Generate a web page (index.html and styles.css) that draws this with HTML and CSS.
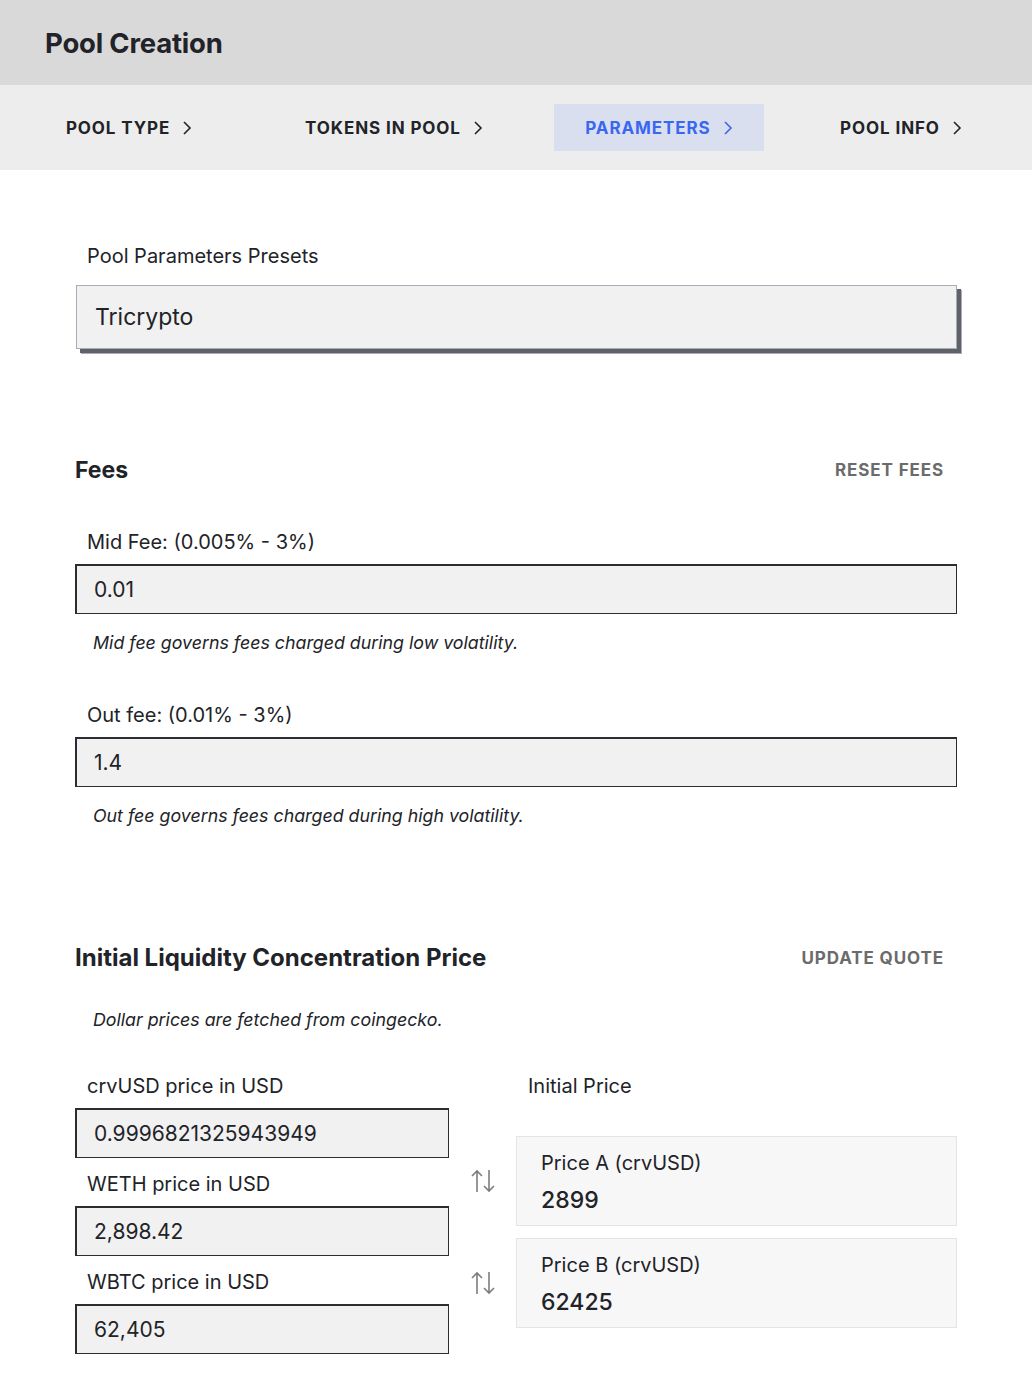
FILE: index.html
```html
<!DOCTYPE html>
<html lang="en">
<head>
  <meta charset="UTF-8" />
  <title>Pool Creation</title>
  <link rel="stylesheet" href="styles.css">
</head>
<body>

  <header class="page-header">
    <h1>Pool Creation</h1>
  </header>

  <nav class="steps">
    <div class="step"><span class="step-btn">POOL TYPE <svg class="chev" viewBox="0 0 10 16"><path d="M2 2 L8 8 L2 14" /></svg></span></div>
    <div class="step"><span class="step-btn">TOKENS IN POOL <svg class="chev" viewBox="0 0 10 16"><path d="M2 2 L8 8 L2 14" /></svg></span></div>
    <div class="step"><span class="step-btn active">PARAMETERS <svg class="chev" viewBox="0 0 10 16"><path d="M2 2 L8 8 L2 14" /></svg></span></div>
    <div class="step"><span class="step-btn">POOL INFO <svg class="chev" viewBox="0 0 10 16"><path d="M2 2 L8 8 L2 14" /></svg></span></div>
  </nav>

  <main class="content">

    <section class="presets">
      <label class="field-label">Pool Parameters Presets</label>
      <div class="select-box">Tricrypto</div>
    </section>

    <section class="fees">
      <div class="section-head">
        <h2>Fees</h2>
        <button class="text-btn">RESET FEES</button>
      </div>

      <div class="field">
        <label class="field-label" for="midFee">Mid Fee: (0.005% - 3%)</label>
        <input type="text" id="midFee" value="0.01" />
        <p class="note">Mid fee governs fees charged during low volatility.</p>
      </div>

      <div class="field">
        <label class="field-label" for="outFee">Out fee: (0.01% - 3%)</label>
        <input type="text" id="outFee" value="1.4" />
        <p class="note">Out fee governs fees charged during high volatility.</p>
      </div>
    </section>

    <section class="liquidity">
      <div class="section-head">
        <h2>Initial Liquidity Concentration Price</h2>
        <button class="text-btn">UPDATE QUOTE</button>
      </div>
      <p class="note">Dollar prices are fetched from coingecko.</p>

      <div class="price-grid">
        <div class="usd-col">
          <label class="field-label" for="crvusd">crvUSD price in USD</label>
          <input type="text" id="crvusd" value="0.9996821325943949" />
          <label class="field-label" for="weth">WETH price in USD</label>
          <input type="text" id="weth" value="2,898.42" />
          <label class="field-label" for="wbtc">WBTC price in USD</label>
          <input type="text" id="wbtc" value="62,405" />
        </div>

        <div class="initial-col">
          <div></div>
          <div class="field-label initial-title">Initial Price</div>

          <svg class="swap" viewBox="0 0 28 28"><path d="M8 25 V4 M3 9 L8 4 L13 9 M20 3 V24 M15 19 L20 24 L25 19" /></svg>
          <div class="price-card">
            <div class="price-name">Price A (crvUSD)</div>
            <div class="price-value">2899</div>
          </div>

          <svg class="swap" viewBox="0 0 28 28"><path d="M8 25 V4 M3 9 L8 4 L13 9 M20 3 V24 M15 19 L20 24 L25 19" /></svg>
          <div class="price-card">
            <div class="price-name">Price B (crvUSD)</div>
            <div class="price-value">62425</div>
          </div>
        </div>
      </div>
    </section>

  </main>
</body>
</html>
```

FILE: styles.css
```css
:root {
  --text: #212328;
  --muted: #6b6b6b;
  --blue: #3a67ef;
  --field-bg: #f1f1f1;
  --field-border: #2a2d32;
}

body {
  margin: 0;
  font-family: Inter, "Noto Sans", sans-serif;
  color: var(--text);
  background: #fff;
}

.page-header {
  height: 85px;
  background: #d9d9d9;
  display: flex;
  align-items: center;
  padding-left: 45px;
}

.page-header h1 {
  margin: 0;
  font-size: 27.5px;
  font-weight: 700;
  letter-spacing: -0.2px;
}

.steps {
  height: 85px;
  background: #ededed;
  display: grid;
  grid-template-columns: 258px 272px 258px 226px;
  align-items: center;
}

.step {
  display: flex;
  justify-content: center;
}

.step-btn {
  display: inline-flex;
  align-items: center;
  gap: 12px;
  height: 47px;
  padding: 0 31px;
  font-size: 17px;
  font-weight: 700;
  letter-spacing: 0.9px;
}

.step-btn.active {
  background: #d9dfee;
  color: var(--blue);
}

.chev {
  width: 10px;
  height: 16px;
  fill: none;
  stroke: currentColor;
  stroke-width: 1.6;
}

.content {
  padding: 0 75px 40px 75px;
}

.field-label {
  display: block;
  padding-left: 12px;
  font-size: 20px;
  line-height: 24px;
}

.presets {
  padding-top: 74px;
}

.presets .field-label {
  margin-bottom: 17px;
}

.select-box {
  width: 881px;
  height: 64px;
  box-sizing: border-box;
  margin-left: 1px;
  padding-left: 18px;
  display: flex;
  align-items: center;
  font-size: 23px;
  background: var(--field-bg);
  border: 1px solid #a9acb6;
  box-shadow: 4px 4px 0 #5f6368, 5px 5px 0 #a9acb6;
}

.section-head {
  display: flex;
  justify-content: space-between;
  align-items: center;
  padding-right: 13px;
}

.section-head h2 {
  margin: 0;
  font-size: 23px;
  line-height: 28px;
  font-weight: 700;
}

.liquidity .section-head h2 {
  font-size: 24px;
}

.text-btn {
  border: none;
  background: none;
  padding: 0;
  font-family: inherit;
  font-size: 17px;
  font-weight: 700;
  letter-spacing: 0.9px;
  color: var(--muted);
  cursor: pointer;
}

.fees {
  margin-top: 107px;
}

.fees .field {
  margin-top: 46px;
}

.fees .field + .field {
  margin-top: 49px;
}

.field .field-label {
  margin-bottom: 10px;
}

input[type="text"] {
  display: block;
  box-sizing: border-box;
  width: 882px;
  height: 50px;
  margin: 0;
  padding: 0 17px;
  font-family: inherit;
  font-size: 21px;
  color: var(--text);
  background: var(--field-bg);
  border: 1px solid var(--field-border);
  border-top-width: 2px;
  border-left-width: 2px;
  outline: none;
}

.note {
  margin: 18px 0 0 18px;
  font-size: 17.8px;
  line-height: 22px;
  font-style: italic;
}

.liquidity {
  margin-top: 117px;
}

.liquidity > .note {
  margin-top: 37px;
}

.price-grid {
  margin-top: 43px;
  display: grid;
  grid-template-columns: 374px 1fr;
}

.usd-col input[type="text"] {
  width: 374px;
  margin: 10px 0 14px;
}

.initial-col {
  display: grid;
  grid-template-columns: 67px 1fr;
  grid-template-rows: 50px 90px 90px;
  row-gap: 12px;
  align-items: center;
}

.initial-title {
  align-self: start;
}

.swap {
  width: 28px;
  height: 28px;
  justify-self: center;
  fill: none;
  stroke: #7d7d7d;
  stroke-width: 1.6;
}

.price-card {
  height: 90px;
  box-sizing: border-box;
  padding: 13px 24px 0;
  background: #f7f7f7;
  border: 1px solid #e4e4e4;
}

.price-name {
  font-size: 20px;
  line-height: 26px;
}

.price-value {
  margin-top: 10px;
  font-size: 23px;
  line-height: 28px;
  font-weight: 500;
}
```
